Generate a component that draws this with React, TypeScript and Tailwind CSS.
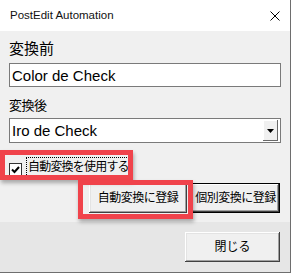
export default function App() {
  return (
    <div className="relative flex h-[273px] w-[291px] flex-col overflow-hidden border-r border-b border-[#6e6e6e] bg-[#f0f0f0] font-['Liberation_Sans','Noto_Sans_CJK_JP',sans-serif] text-black">
      {/* Title bar */}
      <div className="flex h-[31px] shrink-0 items-center justify-between bg-white pl-[10px] pr-[10px]">
        <span className="text-[11.5px] leading-none text-[#111]">PostEdit Automation</span>
        <svg width="10" height="10" viewBox="0 0 10 10" className="block">
          <path d="M0.5 0.5 L9.5 9.5 M9.5 0.5 L0.5 9.5" stroke="#000" strokeWidth="1" />
        </svg>
      </div>

      {/* Body */}
      <div className="flex h-[191px] shrink-0 flex-col pl-[9px] pt-[10px]">
        <div className="h-[15px] text-[15px] leading-[15px]">変換前</div>
        <div className="mt-[7px] flex h-[24px] w-[272px] items-center border border-[#7a7a7a] bg-white pl-[2px] text-[15px] leading-none">
          Color de Check
        </div>

        <div className="mt-[12px] h-[13px] text-[13px] leading-[13px] tracking-[-0.5px]">変換後</div>
        <div className="mt-[6px] flex h-[25px] w-[272px] items-stretch border border-[#7a7a7a] bg-white">
          <div className="flex flex-1 items-center pl-[2px] text-[15px] leading-none">Iro de Check</div>
          <div className="my-[1px] mr-[2px] flex w-[15px] items-center justify-center bg-[#f0f0f0] shadow-[inset_-1px_-1px_0_#696969,inset_1px_1px_0_#ffffff]">
            <svg width="7" height="4" viewBox="0 0 7 4" className="block">
              <path d="M0 0 H7 L3.5 4 Z" fill="#000" />
            </svg>
          </div>
        </div>

        {/* Checkbox row */}
        <div className="mt-[14px] flex h-[20px] items-end">
          <div className="mb-[1px] flex h-[13px] w-[13px] items-center justify-center border border-[#333] bg-white">
            <svg width="11" height="11" viewBox="0 0 11 11" className="block">
              <path d="M2 5.5 L4.5 8 L9 3" stroke="#000" strokeWidth="2" fill="none" />
            </svg>
          </div>
          <div className="ml-[4px] flex h-[20px] items-center border border-dotted border-black px-[1px] text-[12px] leading-none tracking-[-0.8px]">
            自動変換を使用する
          </div>
        </div>

        {/* Register buttons */}
        <div className="mt-[6px] flex gap-[4px] pl-[80px]">
          <button className="flex h-[30px] w-[98px] items-center justify-center bg-[#f0f0f0] text-[12px] leading-none tracking-[-0.5px] shadow-[inset_-1px_-1px_0_#404040,inset_1px_1px_0_#ffffff,inset_-2px_-2px_0_#a0a0a0,inset_2px_2px_0_#e3e3e3]">
            自動変換に登録
          </button>
          <button className="flex h-[30px] w-[89px] items-center justify-center overflow-visible whitespace-nowrap border border-black bg-[#f0f0f0] text-[12px] leading-none tracking-[-0.5px] shadow-[inset_-1px_-1px_0_#404040,inset_1px_1px_0_#ffffff,inset_-2px_-2px_0_#a0a0a0]">
            個別変換に登録
          </button>
        </div>
      </div>

      {/* Bottom */}
      <div className="flex-1 bg-[#e6e6e6] pt-[10px] pl-[185px]">
        <button className="flex h-[30px] w-[95px] items-center justify-center bg-[#f0f0f0] text-[12px] leading-none shadow-[inset_-1px_-1px_0_#404040,inset_1px_1px_0_#ffffff,inset_-2px_-2px_0_#a0a0a0,inset_2px_2px_0_#e3e3e3]">
          閉じる
        </button>
      </div>

      {/* Red highlight boxes */}
      <div className="pointer-events-none absolute left-0 top-[150px] h-[30px] w-[133px] border-[5px] border-[#f0434b] shadow-[1px_3px_4px_rgba(0,0,0,0.3)]" />
      <div className="pointer-events-none absolute left-[78px] top-[180px] h-[39px] w-[115px] border-[5px] border-[#f0434b] shadow-[1px_3px_4px_rgba(0,0,0,0.3)]" />
    </div>
  );
}
